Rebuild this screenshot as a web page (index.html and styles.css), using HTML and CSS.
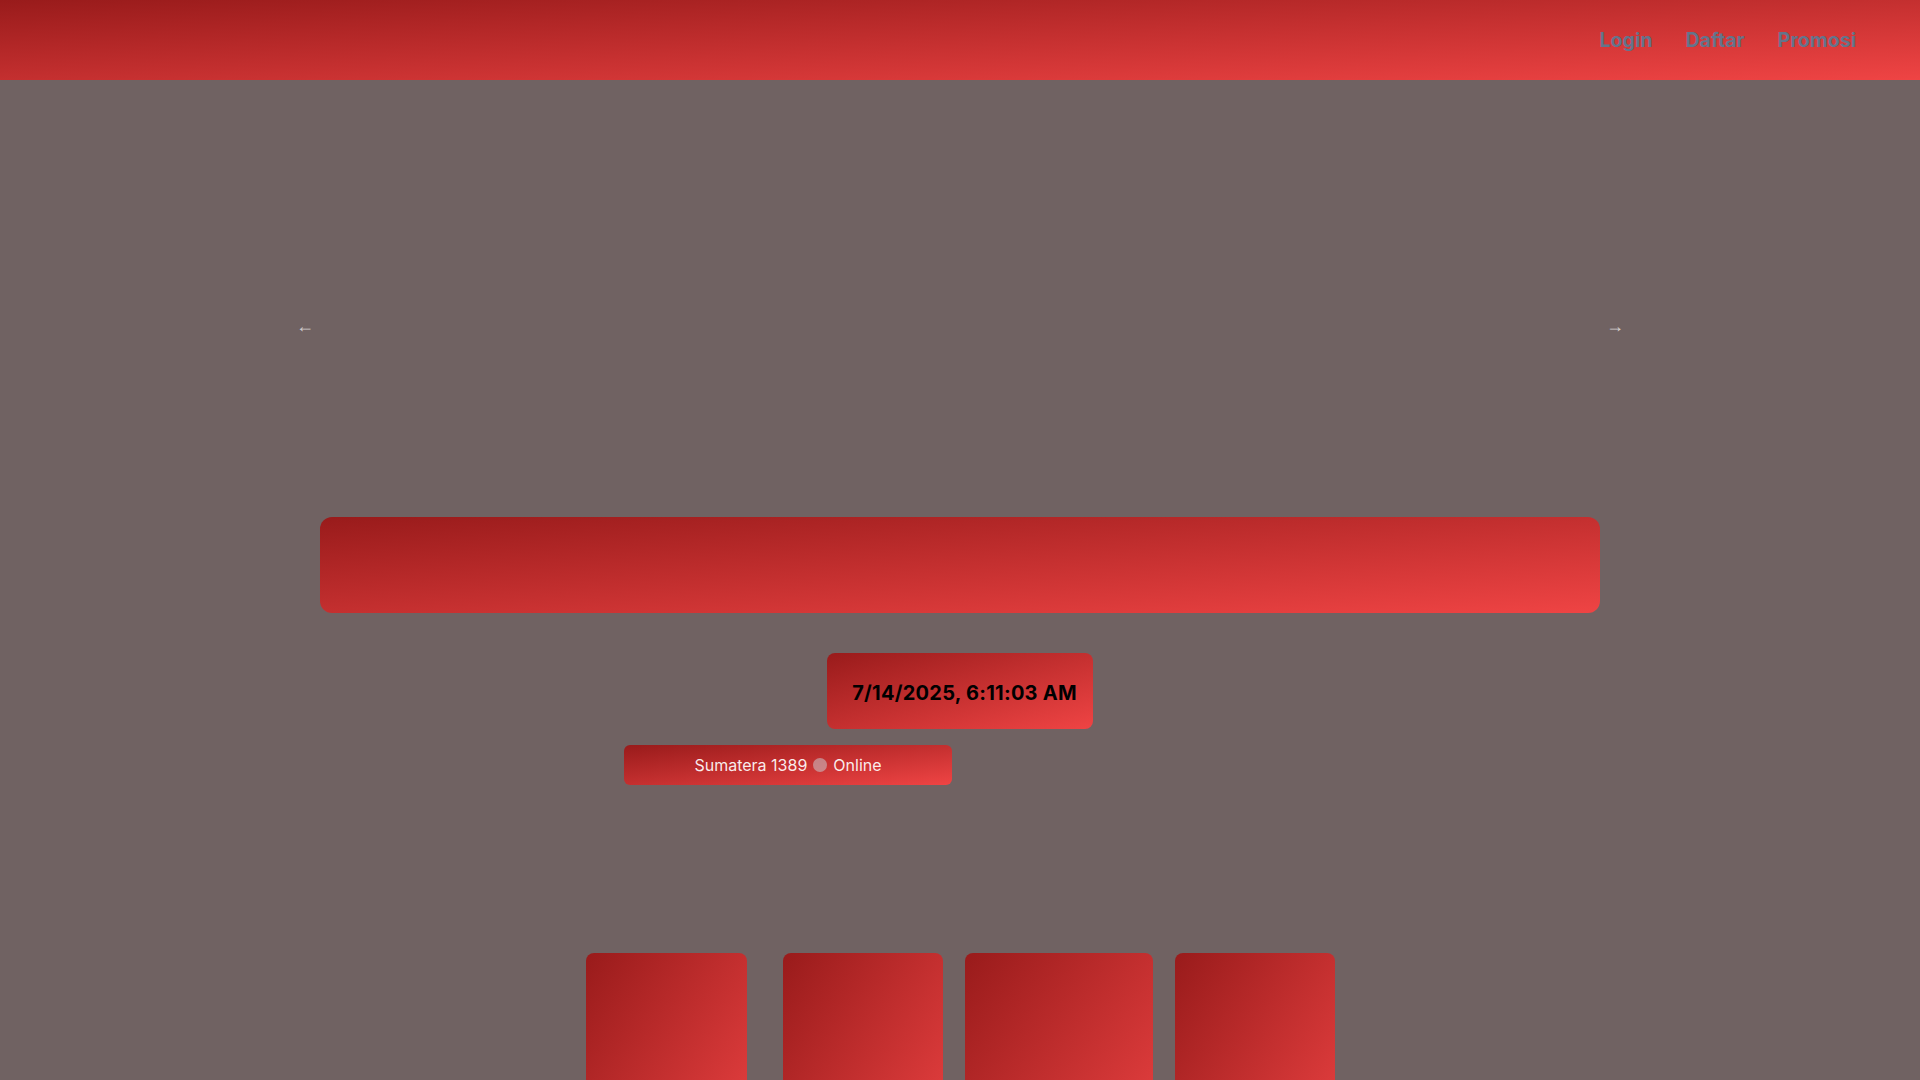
FILE: index.html
```html
<!DOCTYPE html>
<html lang="id">
<head>
<meta charset="utf-8">
<title>Sumatera 1389</title>
<link rel="stylesheet" href="styles.css">
</head>
<body>
<header class="topbar">
  <nav class="nav">
    <a class="nav-link" href="#">Login</a>
    <a class="nav-link" href="#">Daftar</a>
    <a class="nav-link" href="#">Promosi</a>
  </nav>
</header>
<main class="main">
  <section class="carousel">
    <button class="arrow arrow-left" type="button">←</button>
    <button class="arrow arrow-right" type="button">→</button>
  </section>
  <div class="banner"></div>
  <div class="clock-row">
    <div class="clock">7/14/2025, 6:11:03 AM</div>
  </div>
  <div class="status-row">
    <div class="status">Sumatera 1389 <span class="dot"></span> Online</div>
  </div>
  <div class="cards">
    <div class="card card-first"></div>
    <div class="card"></div>
    <div class="card card-wide"></div>
    <div class="card"></div>
  </div>
</main>
</body>
</html>
```
FILE: styles.css
```css
* { box-sizing: border-box; }
html, body { margin: 0; padding: 0; }
body {
  background: #706262;
  font-family: Inter, "Noto Sans", "Liberation Sans", sans-serif;
  color: #fff;
}
.topbar {
  height: 80px;
  background: linear-gradient(to bottom right, #991b1b, #ef4444);
  display: flex;
  align-items: center;
  justify-content: flex-end;
  padding-right: 64px;
}
.nav {
  display: flex;
  gap: 33px;
}
.nav-link {
  color: #64748b;
  text-decoration: none;
  font-weight: 700;
  font-size: 19.6px;
  line-height: 24px;
}
.main {
  width: 1280px;
  margin: 0 auto;
  padding-top: 61px;
}
.carousel {
  position: relative;
  height: 376px;
}
.arrow {
  position: absolute;
  top: 173px;
  background: none;
  border: 0;
  padding: 0;
  color: rgba(255,255,255,0.7);
  font-family: "Liberation Sans", "DejaVu Sans", sans-serif;
  font-size: 18px;
  line-height: 24px;
  cursor: pointer;
}
.arrow-left { left: -24px; }
.arrow-right { right: -24px; }
.banner {
  height: 96px;
  border-radius: 12px;
  background: linear-gradient(to bottom right, #991b1b, #ef4444);
}
.clock-row {
  display: flex;
  justify-content: center;
  margin-top: 40px;
}
.clock {
  background: linear-gradient(to bottom right, #991b1b, #ef4444);
  border-radius: 8px;
  padding: 26px 16px 22px 25px;
  color: #000;
  font-weight: 700;
  font-size: 20px;
  line-height: 28px;
  letter-spacing: 0.25px;
}
.status-row {
  display: flex;
  margin-top: 16px;
  padding-left: 304px;
}
.status {
  width: 328px;
  height: 40px;
  background: linear-gradient(to bottom right, #991b1b, #ef4444);
  border-radius: 6px;
  display: flex;
  align-items: center;
  justify-content: center;
  gap: 6px;
  font-size: 16px;
  color: rgba(255,255,255,0.92);
}
.dot {
  width: 14px;
  height: 14px;
  border-radius: 50%;
  background: rgba(200,200,205,0.55);
}
.cards {
  display: flex;
  justify-content: center;
  gap: 22px;
  margin-top: 168px;
}
.card {
  width: 160px;
  height: 240px;
  border-radius: 8px;
  background: linear-gradient(to bottom right, #991b1b, #ef4444);
}
.card-first { width: 161px; margin-right: 14px; }
.card-wide { width: 188px; }
```
